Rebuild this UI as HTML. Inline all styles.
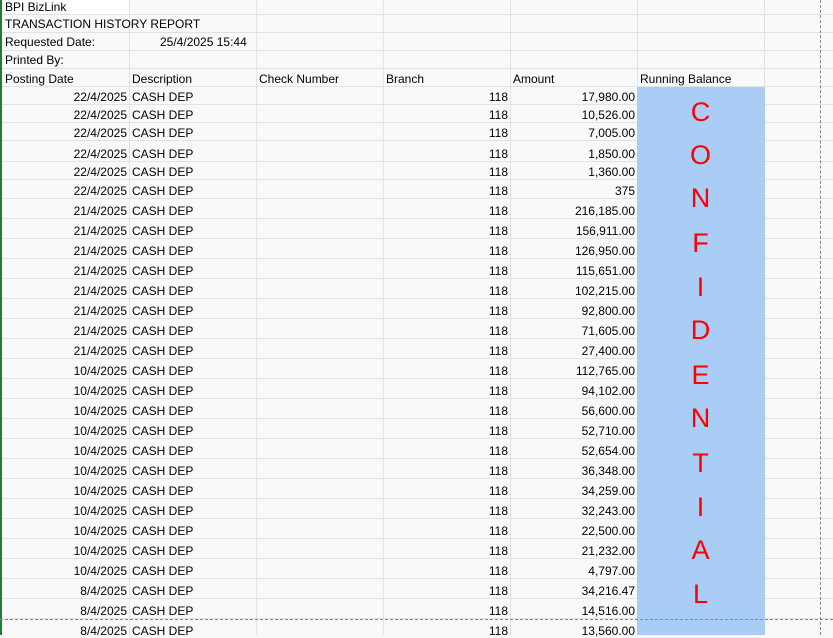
<!DOCTYPE html>
<html><head><style>
body{margin:0;width:833px;height:635px;overflow:hidden;background:#f9f9f9;font-family:"Liberation Sans",Arial,sans-serif;font-size:12px;color:#000;position:relative}
.h{position:absolute;left:0;width:833px;height:1px;background:#e2e2e2}
.v{position:absolute;top:0;height:635px;width:1px;background:#e2e2e2}
.t{position:absolute;white-space:nowrap;line-height:14px}
.r{text-align:right}
.L{position:absolute;left:637px;width:127px;text-align:center;color:#f00;font-size:27px;line-height:30px}
</style></head><body>
<div id="g"></div>
<div style="position:absolute;left:2px;top:0;width:127px;height:14px;background:#fff"></div>
<div style="position:absolute;left:637px;top:87px;width:128px;height:548px;background:#a9cdf5"></div>
<div style="position:absolute;left:0;top:0;width:2px;height:635px;background:#1e7b3c"></div>
<div style="position:absolute;left:820px;top:0;height:635px;border-left:1px dashed #888"></div>
<div style="position:absolute;left:0;top:619px;width:833px;border-top:1px dashed #888"></div>
<div class="t" style="left:5px;top:0">BPI BizLink</div>
<div class="t" style="left:5px;top:17px">TRANSACTION HISTORY REPORT</div>
<div class="t" style="left:5px;top:35px">Requested Date:</div>
<div class="t" style="left:160px;top:35px">25/4/2025 15:44</div>
<div class="t" style="left:5px;top:53px">Printed By:</div>
<div class="t" style="left:5px;top:72px">Posting Date</div>
<div class="t" style="left:132px;top:72px">Description</div>
<div class="t" style="left:259px;top:72px">Check Number</div>
<div class="t" style="left:386px;top:72px">Branch</div>
<div class="t" style="left:513px;top:72px">Amount</div>
<div class="t" style="left:640px;top:72px">Running Balance</div>
<div id="d"></div>
<div class="L" style="top:97px">C</div>
<div class="L" style="top:140px">O</div>
<div class="L" style="top:183px">N</div>
<div class="L" style="top:228px">F</div>
<div class="L" style="top:272px">I</div>
<div class="L" style="top:315px">D</div>
<div class="L" style="top:360px">E</div>
<div class="L" style="top:403px">N</div>
<div class="L" style="top:448px">T</div>
<div class="L" style="top:492px">I</div>
<div class="L" style="top:535px">A</div>
<div class="L" style="top:579px">L</div>
<script>
var g='';[129,256,383,510,637,764].forEach(function(x){g+='<div class="v" style="left:'+x+'px"></div>'});
var ys=[14,32,50,68,86,104,122,140,161,179,198];for(var y=218;y<=618;y+=20)ys.push(y);
ys.forEach(function(y){g+='<div class="h" style="top:'+y+'px"></div>'});
document.getElementById('g').innerHTML=g;
var rows=[['22/4/2025','17,980.00'],['22/4/2025','10,526.00'],['22/4/2025','7,005.00'],['22/4/2025','1,850.00'],['22/4/2025','1,360.00'],['22/4/2025','375'],['21/4/2025','216,185.00'],['21/4/2025','156,911.00'],['21/4/2025','126,950.00'],['21/4/2025','115,651.00'],['21/4/2025','102,215.00'],['21/4/2025','92,800.00'],['21/4/2025','71,605.00'],['21/4/2025','27,400.00'],['10/4/2025','112,765.00'],['10/4/2025','94,102.00'],['10/4/2025','56,600.00'],['10/4/2025','52,710.00'],['10/4/2025','52,654.00'],['10/4/2025','36,348.00'],['10/4/2025','34,259.00'],['10/4/2025','32,243.00'],['10/4/2025','22,500.00'],['10/4/2025','21,232.00'],['10/4/2025','4,797.00'],['8/4/2025','34,216.47'],['8/4/2025','14,516.00'],['8/4/2025','13,560.00']];
var cs=[96,114,132,153,171,190];for(var c=210;c<=630;c+=20)cs.push(c);
var d='';rows.forEach(function(r,i){var t=cs[i]-6;
d+='<div class="t r" style="left:2px;width:125px;top:'+t+'px">'+r[0]+'</div>';
d+='<div class="t" style="left:132px;top:'+t+'px">CASH DEP</div>';
d+='<div class="t r" style="left:383px;width:125px;top:'+t+'px">118</div>';
d+='<div class="t r" style="left:510px;width:125px;top:'+t+'px">'+r[1]+'</div>';});
document.getElementById('d').innerHTML=d;
</script>
</body></html>
